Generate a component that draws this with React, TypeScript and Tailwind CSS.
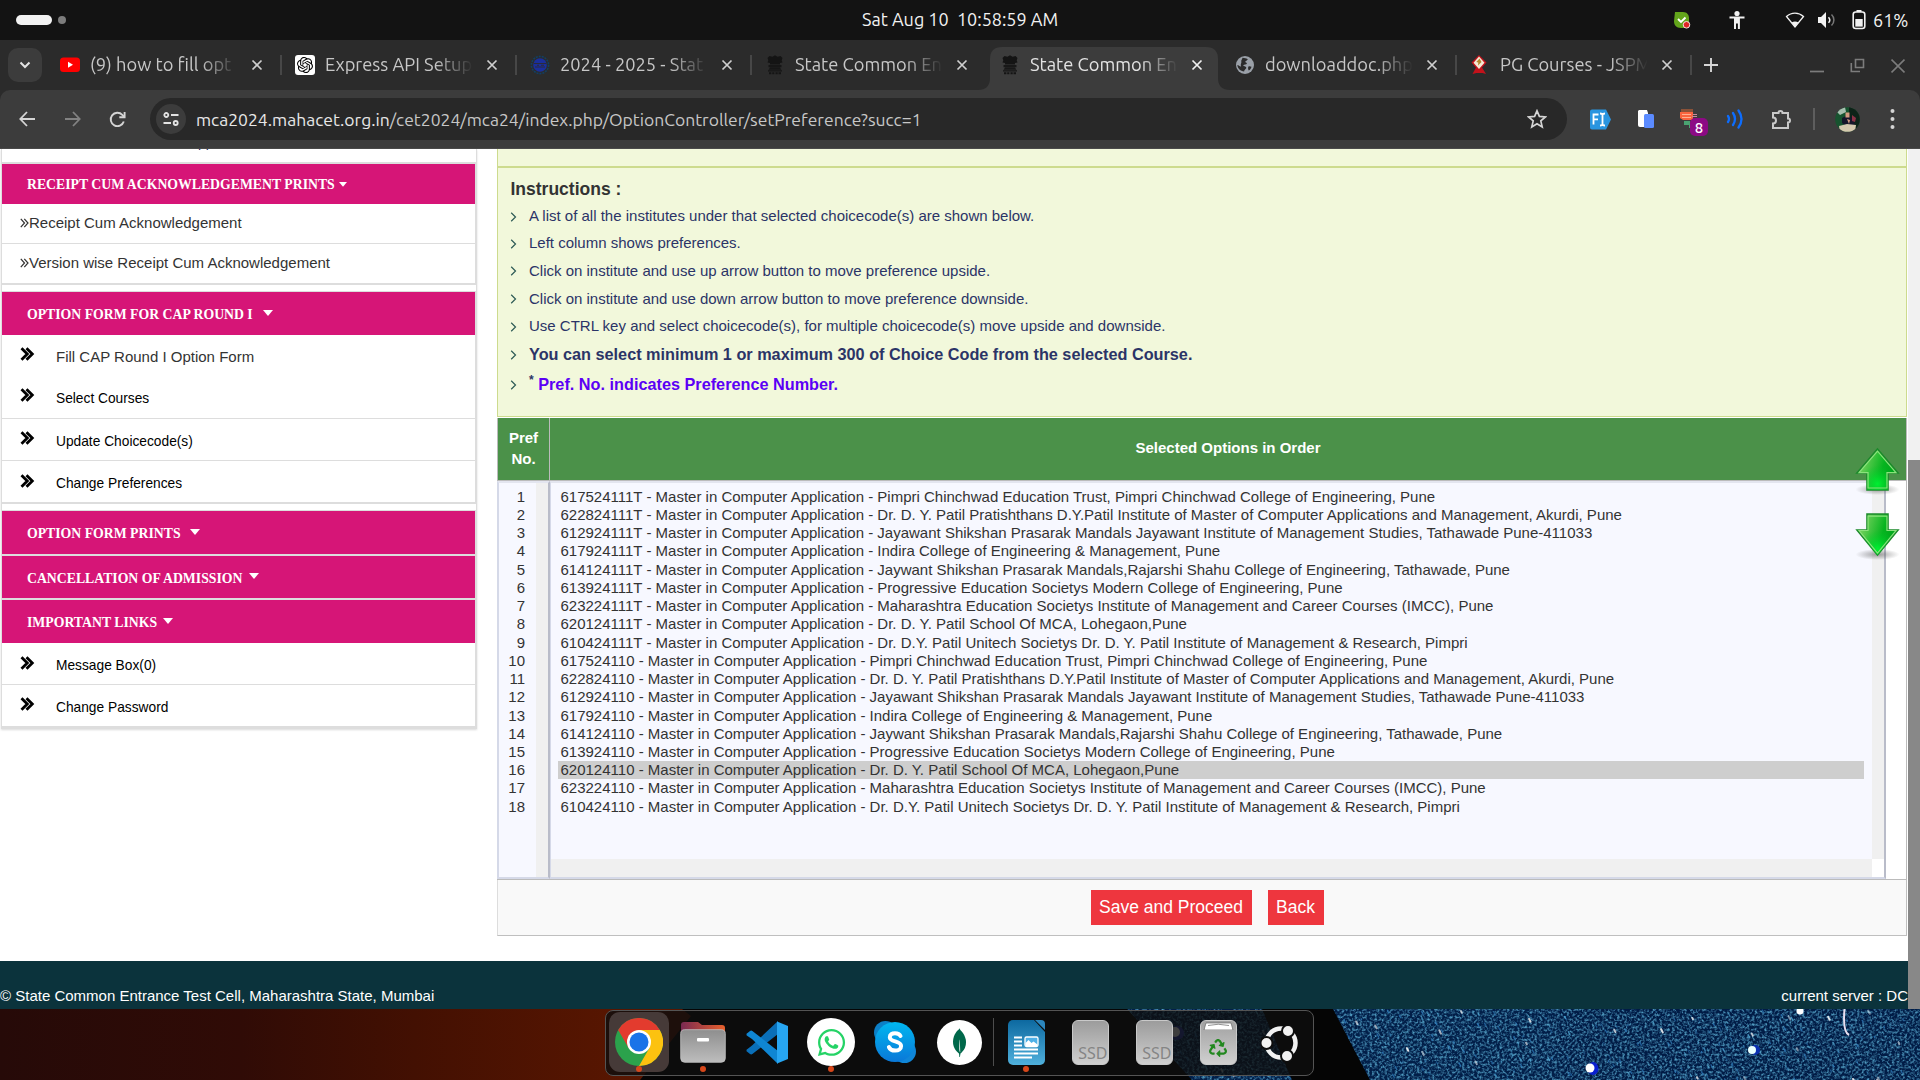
import type { ReactNode } from "react";
import { FaWhatsapp, FaRecycle } from "react-icons/fa";
import { SiOpenai, SiMongodb } from "react-icons/si";

const UI = "font-['Ubuntu','Noto_Sans',sans-serif]";

/* ---------- favicons ---------- */
function YoutubeIcon() {
  return (
    <svg width="20" height="20" viewBox="0 0 20 20">
      <rect x="0" y="2.500" width="20" height="14.500" rx="3.500" fill="#f00" />
      <path d="M8 6.800l5 3-5 3z" fill="#fff" />
    </svg>
  );
}
function GptIcon() {
  return (
    <span className="flex h-5 w-5 items-center justify-center rounded-[3px] bg-white text-[16px] text-black">
      <SiOpenai />
    </span>
  );
}
function CellIcon() {
  return (
    <svg width="20" height="20" viewBox="0 0 20 20">
      <circle cx="10" cy="10" r="8.600" fill="none" stroke="#123f63" strokeWidth="1.600" strokeDasharray="2 1" />
      <circle cx="10" cy="10" r="6.800" fill="#1a2f9c" />
      <path d="M4 8.500h12M5 12h10M7 10.200h2M11 10.200h3" stroke="#2b2b3c" strokeWidth="1.100" />
    </svg>
  );
}
function EmblemIcon() {
  return (
    <svg width="20" height="20" viewBox="0 0 20 20" fill="#141414">
      <path d="M4.500 1l3 .7L10 .3l2.500 1.400 3-.7 2 2-.8 2.200.8 2.300-2.600.6.2 1.500H4.900l.2-1.500-2.600-.6.8-2.300L2.500 3z" />
      <path d="M3.500 10h13v2.200h-13zM5 12.600h10l1.400 2.200H3.600z" opacity=".9" />
      <path d="M3 15.200h14v1.300H3zM4 17.300h2.400v2H4zM7.200 17.300h2.200v2H7.200zM10.500 17.300h2.200v2h-2.200zM13.500 17.300h2.500v2h-2.500z" />
    </svg>
  );
}
function GlobeIcon() {
  return (
    <svg width="20" height="20" viewBox="0 0 20 20">
      <circle cx="10" cy="10" r="9" fill="#9aa0a8" />
      <path d="M7.500 2.800c2 .6 3.800.2 5 1.200.8 1.200-1.600 1.600-2.200 2.600-.3 1.200 1.800.8 1.600 2.200-.6 1.200-2.600.6-3.800 1.400 1 1.400 3.400 1 3.200 2.800-.4 1.400-2 1.400-2.200 3.400-3.600-.2-6.400-2.800-6.800-6.400 1.400.2 2.400 1.600 3.800 1.400C5 9.400 6.800 8 6.300 6.400 6 5.200 7.300 4.200 7.500 2.800z" fill="#2b2b2b" />
      <path d="M13.500 11.500c1.200-.4 2.200.2 3 .2-.4 1.700-1.500 3-2.800 3.900-.5-1.300-1-2.900-.2-4.100z" fill="#2b2b2b" />
    </svg>
  );
}
function JspmIcon() {
  return (
    <svg width="20" height="20" viewBox="0 0 20 20">
      <path d="M2.500 19l3.500-6.500h6L16 19l-3.500-1h-6z" fill="#c3121b" />
      <path d="M9 0l7.500 7.500L9 16 1.500 7.500z" fill="#c3121b" />
      <path d="M9 1.500l5.500 6.200L9 14 3.500 7.700z" fill="#f5e9d6" />
      <path d="M9.500 3.500l2 3.500-3.500 3.500.3-3-2-.5z" fill="#b5892f" />
    </svg>
  );
}

const tabs: { title: string; icon: ReactNode; sep: boolean }[] = [
  { title: "(9) how to fill opt", icon: <YoutubeIcon />, sep: true },
  { title: "Express API Setup", icon: <GptIcon />, sep: true },
  { title: "2024 - 2025 - Stat", icon: <CellIcon />, sep: true },
  { title: "State Common En", icon: <EmblemIcon />, sep: false },
  { title: "State Common En", icon: <EmblemIcon />, sep: false },
  { title: "downloaddoc.php", icon: <GlobeIcon />, sep: true },
  { title: "PG Courses - JSPM", icon: <JspmIcon />, sep: true },
];

function TopBar() {
  return (
    <div className={"relative flex h-10 items-center justify-between bg-[#131313] pl-4 pr-3 text-[#f2f2f2] " + UI}>
      <div className="flex items-center gap-1.5">
        <span className="h-[10px] w-9 rounded-full bg-[#f2f2f2]" />
        <span className="h-2 w-2 rounded-full bg-[#7d7d7d]" />
      </div>
      <div className="absolute left-[862px] top-[6px] whitespace-pre text-[18px] leading-[26px]">Sat Aug 10  10:58:59 AM</div>
      <div className="flex items-center">
        <svg width="18" height="18" viewBox="0 0 18 18" className="mr-[37px]">
          <path d="M2 1h8c4 0 6 3 6 6v9c-2 1-5 1-8 1-5 0-7-3-7-7z" fill="#63a51b" />
          <path d="M5 8l3 3 4.500-4.500" stroke="#fff" strokeWidth="1.900" fill="none" />
          <circle cx="13.500" cy="13.800" r="3.300" fill="#e02424" stroke="#f6dede" strokeWidth="1" />
        </svg>
        <svg width="18" height="20" viewBox="0 0 18 20" fill="#f2f2f2" className="mr-[39px]">
          <circle cx="9" cy="3.500" r="2.600" />
          <path d="M1.500 6.500h15v2h-4.600V19h-2v-5.500H8V19H6V8.500H1.500z" />
        </svg>
        <svg width="20" height="18" viewBox="0 0 20 18" className="mr-[13px]">
          <path d="M1.500 5.500c5-4.600 12-4.600 17 0L10 16z" fill="none" stroke="#f2f2f2" strokeWidth="1.300" />
          <path d="M6.500 11.600c2.300-1.600 4.700-1.600 7 0L10 16z" fill="#f2f2f2" />
        </svg>
        <svg width="18" height="18" viewBox="0 0 18 18" className="mr-[16px]">
          <path d="M0 6h3l5-5v16l-5-5H0z" fill="#f2f2f2" />
          <path d="M10.500 6.200c1.600 1.700 1.600 3.900 0 5.600" fill="none" stroke="#f2f2f2" strokeWidth="1.500" />
          <path d="M13.500 3.500c3.200 3 3.200 8 0 11" fill="none" stroke="#777" strokeWidth="1.500" />
        </svg>
        <svg width="14" height="20" viewBox="0 0 14 20" className="mr-[7px]">
          <path d="M4.500 0h5v2h-5z" fill="#f2f2f2" />
          <rect x="1.200" y="2" width="11.600" height="16.500" rx="2.500" fill="none" stroke="#f2f2f2" strokeWidth="1.600" />
          <rect x="3.300" y="9" width="7.400" height="7.600" fill="#f2f2f2" />
        </svg>
        <span className="-mt-px w-[35px] whitespace-nowrap text-[18px] leading-[26px]">61%</span>
      </div>
    </div>
  );
}

function CloseX({ active }: { active: boolean }) {
  return (
    <svg width="12" height="12" viewBox="0 0 12 12" stroke={active ? "#f0f0f0" : "#cfcfcf"} strokeWidth="1.700">
      <path d="M1.500 1.500l9 9M10.500 1.500l-9 9" />
    </svg>
  );
}

function TabStrip() {
  return (
    <div className={"flex h-[50px] items-start bg-[#2b2b2b] " + UI}>
      <div className="ml-2 mr-[4px] mt-2 flex h-[34px] w-[34px] items-center justify-center rounded-[10px] bg-[#3c3c3c]">
        <svg width="12" height="8" viewBox="0 0 12 8" fill="none" stroke="#e3e3e3" strokeWidth="2">
          <path d="M1.500 1.500L6 6l4.500-4.500" />
        </svg>
      </div>
      {tabs.map((t, i) => {
        const active = i === 4;
        return (
          <div key={i} className="relative flex h-[50px] w-[235px] items-center">
            {active && (
              <svg className="absolute left-[-8px] top-[7px]" width="252" height="43" viewBox="0 0 252 43">
                <path d="M0 43Q12 43 12 31V12Q12 0 24 0H228Q240 0 240 12V31Q240 43 252 43z" fill="#3c3c3c" />
              </svg>
            )}
            <div className="relative flex w-full items-center">
              <span className="ml-[14px] flex h-5 w-5">{t.icon}</span>
              <span
                className={
                  "-mt-[2px] ml-[10px] w-[147px] overflow-hidden whitespace-nowrap text-[18.3px] leading-[26px] [mask-image:linear-gradient(to_right,#000_110px,transparent_148px)] " +
                  (active ? "text-[#e3e3e3]" : "text-[#c7c7c7]")
                }
              >
                {t.title}
              </span>
              <span className="ml-[14px] flex"><CloseX active={active} /></span>
            </div>
            {t.sep && <span className="absolute right-[-1px] top-[15px] h-5 w-[2px] bg-[#474747]" />}
          </div>
        );
      })}
      <svg className="ml-[13px] mt-[18px]" width="14" height="14" viewBox="0 0 14 14" stroke="#d6d6d6" strokeWidth="1.900">
        <path d="M0 7h14M7 0v14" />
      </svg>
      <div className="ml-auto mr-[15px] mt-[18px] flex items-start gap-[26px]">
        <svg width="14" height="16" viewBox="0 0 14 16"><path d="M0 13.500h14" stroke="#7c7c7c" strokeWidth="1.700" /></svg>
        <svg width="15" height="16" viewBox="0 0 15 16" fill="none" stroke="#7c7c7c" strokeWidth="1.600">
          <path d="M5.500 1.500h8v8h-8zM1.300 5v8.500H10" />
        </svg>
        <svg width="14" height="16" viewBox="0 0 14 16" stroke="#7c7c7c" strokeWidth="1.700"><path d="M.5 1.500l13 13M13.500 1.500l-13 13" /></svg>
      </div>
    </div>
  );
}

function Toolbar() {
  return (
    <div className={"bg-[#2b2b2b] " + UI}>
      <div className="flex h-[59px] items-center rounded-t-[10px] border-b border-[#4a4a4a] bg-[#3c3c3c]">
        <svg className="ml-[19px]" width="16" height="16" viewBox="0 0 16 16" fill="none" stroke="#d5d5d5" strokeWidth="1.800"><path d="M16 8H1.500M8 1L1.300 8 8 15" /></svg>
        <svg className="ml-[30px]" width="16" height="16" viewBox="0 0 16 16" fill="none" stroke="#828282" strokeWidth="1.800"><path d="M0 8h14.500M8 1l6.700 7L8 15" /></svg>
        <svg className="ml-[28px]" width="17" height="17" viewBox="0 0 17 17" fill="none" stroke="#d5d5d5" strokeWidth="1.900">
          <path d="M14.800 10.500A6.700 6.700 0 1 1 13.300 3.800L15.300 6" />
          <path d="M15.600 1v5.300h-5.300" />
        </svg>
        <div className="ml-[24px] flex h-[42px] w-[1417px] items-center rounded-full bg-[#282828]">
          <span className="ml-[6px] flex h-[30px] w-[30px] items-center justify-center rounded-full bg-[#3c3c3c]">
            <svg width="16" height="14" viewBox="0 0 16 14" fill="none" stroke="#e3e3e3" strokeWidth="1.800">
              <circle cx="3.300" cy="3" r="2" /><path d="M8 3h7.500M.5 11H8" /><circle cx="12.700" cy="11" r="2" />
            </svg>
          </span>
          <span className="ml-[10px] whitespace-nowrap pt-px text-[17.53px] leading-[26px] text-[#c7c7c7]">
            <span className="text-[#e8e8e8]">mca2024.mahacet.org.in</span>/cet2024/mca24/index.php/OptionController/setPreference?succ=1
          </span>
          <svg className="ml-auto mr-[20px]" width="20" height="20" viewBox="0 0 20 20" fill="none" stroke="#d5d5d5" strokeWidth="1.700">
            <path d="M10 1.800l2.400 5.600 6 .5-4.600 4 1.400 6L10 14.700l-5.200 3.200 1.400-6-4.600-4 6-.5z" />
          </svg>
        </div>
        <svg className="ml-[23px]" width="21" height="21" viewBox="0 0 21 21">
          <path d="M2 .5h14l5 10-5 10H2a2 2 0 0 1-2-2v-16a2 2 0 0 1 2-2z" fill="#2a95e0" />
          <path d="M3.500 15.500v-10h5M3.500 10.300H8M10 4.500c1.500 0 2.500.5 2.500 1.500 0-1 1-1.500 2.500-1.500M12.500 6v9M10 16.500c1.500 0 2.500-.5 2.500-1.500 0 1 1 1.500 2.500 1.500" fill="none" stroke="#fff" strokeWidth="1.800" />
        </svg>
        <svg className="ml-[26px]" width="18" height="20" viewBox="0 0 18 20">
          <path d="M2 1h8l1 3v14H3a2 2 0 0 1-2-2V2z" fill="#fff" />
          <rect x="7" y="5" width="10" height="14" rx="1.500" fill="#5b8bff" />
        </svg>
        <div className="relative ml-[25px] h-[22px] w-[28px]">
          <svg width="18" height="20" viewBox="0 0 18 20">
            <path d="M1 1h12v3H1z" fill="#8a5238" /><path d="M0 4h13v8H3l-3-2z" fill="#f9643f" />
            <path d="M2 6.500h9M2 9.500h9" stroke="#ffb092" /><path d="M13 6.500h4M12 8.500h5" stroke="#c98a9a" /><path d="M4 13h6v4H4zM9 15h2v5H9z" fill="#4aa371" />
          </svg>
          <span className="absolute left-[10px] top-[10px] flex h-[18px] w-[18px] items-center justify-center rounded-[5px] bg-[#8c0a84] text-[15px] font-medium leading-none text-white">8</span>
        </div>
        <svg className="ml-[18px]" width="18" height="20" viewBox="0 0 18 20" fill="none" stroke="#0d6dfd" strokeWidth="2.300" strokeLinecap="round">
          <path d="M2 7q2 3 0 6M7 4q4 6 0 12M12.500 1.500q6 8.500 0 17" />
        </svg>
        <svg className="ml-[27px]" width="21" height="21" viewBox="0 0 21 21" fill="none" stroke="#c9c9c9" strokeWidth="2">
          <path d="M2 4h5.500a2 2 0 0 1 4 0H17v5.500a2 2 0 0 1 0 4V19H2v-4.500a3 3 0 0 0 0-6z" />
        </svg>
        <span className="ml-[21px] h-[22px] w-[2px] bg-[#5e5e5e]" />
        <svg className="ml-[20px]" width="25" height="25" viewBox="0 0 25 25">
          <defs><clipPath id="av"><circle cx="12.500" cy="12.500" r="12.300" /></clipPath></defs>
          <g clipPath="url(#av)">
            <rect width="25" height="25" fill="#17532f" />
            <path d="M14 0h11v25H14z" fill="#0d2318" />
            <path d="M1 4c3-3 6-4 9-4l1 5-6 3z" fill="#a6bfae" />
            <path d="M7 11l6-3 5 4 2 6-8 2-5-4z" fill="#16162a" />
            <path d="M10.500 5.500h4v5h-4zM12 12l3 1-1 4z" fill="#d39b80" />
            <path d="M4 19l8-2 9 1-1 7H5z" fill="#d5c9ae" />
            <path d="M17 8l4 3-1 4-3-1z" fill="#8a3245" />
          </g>
        </svg>
        <svg className="ml-[30px]" width="5" height="22" viewBox="0 0 5 22" fill="#d5d5d5"><circle cx="2.500" cy="3" r="2" /><circle cx="2.500" cy="11" r="2" /><circle cx="2.500" cy="19" r="2" /></svg>
      </div>
    </div>
  );
}

function Caret({ cls, w = 10 }: { cls: string; w?: number }) {
  return (
    <svg className={cls} width={w} height={w * 0.6} viewBox="0 0 10 6"><path d="M0 0h10L5 6z" fill="#fff" /></svg>
  );
}

function PinkHeading({ text, h, caret, w }: { text: string; h: string; caret: string; w?: number }) {
  return (
    <div className={"flex items-center bg-[#d61577] pl-[25px] font-['Liberation_Serif',serif] text-[13.75px] font-bold text-white " + h}>
      <span className="whitespace-nowrap">{text}</span>
      <Caret cls={caret} w={w} />
    </div>
  );
}

function SideLink({ text, h, first, line }: { text: string; h: string; first?: boolean; line?: boolean }) {
  return (
    <div className={"flex items-center bg-white pl-[18px] " + h + (line ? " border-b border-[#ddd]" : "")}>
      <svg width="15" height="14" viewBox="0 0 15 14" fill="none" stroke="#000" strokeWidth="2.800" className="relative -top-[4px]">
        <path d="M1.500 1.200L7.300 7l-5.800 5.800M6.500 1.200L12.300 7l-5.800 5.800" />
      </svg>
      <span className={first ? "ml-[21px] text-[15px] text-[#333]" : "ml-[21px] text-[13.75px] text-black"}>{text}</span>
    </div>
  );
}

function DoubleAngle() {
  return (
    <svg width="9" height="10" viewBox="0 0 9 10" fill="none" stroke="#333" strokeWidth="1.200">
      <path d="M.8.8L4.500 5 .8 9.200M4.300.8L8 5 4.300 9.200" />
    </svg>
  );
}

function Sidebar() {
  return (
    <div className="ml-px h-[580px] w-[476px] overflow-hidden border-l border-r border-[#ddd] shadow-[0_1px_2px_rgba(0,0,0,0.15)]">
      <div className="flex h-[15px] items-start border-b-2 border-[#ddd]">
        <span className="ml-[196px] mt-[-13px] h-4 text-[13.75px] leading-[14px] text-[#1d2a66]">pp</span>
      </div>
      <div className="border-r border-[#ddd]">
        <PinkHeading text="RECEIPT CUM ACKNOWLEDGEMENT PRINTS" h="h-10 pt-[2px]" caret="ml-1 -mt-px" w={8} />
        <div className="flex h-10 items-center border-b border-[#ddd] pb-px pl-[18px] text-[15px] text-[#333]">
          <DoubleAngle /><span>Receipt Cum Acknowledgement</span>
        </div>
        <div className="flex h-[41px] items-center border-b-2 border-[#ddd] pb-px pl-[18px] text-[15px] text-[#333]">
          <DoubleAngle /><span>Version wise Receipt Cum Acknowledgement</span>
        </div>
      </div>
      <div className="h-[7px] border-b border-[#ddd] bg-white" />
      <div className="border-r border-[#ddd]">
        <PinkHeading text="OPTION FORM FOR CAP ROUND I" h="h-[43px] pt-[3px]" caret="relative -top-[2px] ml-[10px]" />
        <SideLink text="Fill CAP Round I Option Form" h="h-[43px] pt-[2px]" first />
        <SideLink text="Select Courses" h="h-[41px] pt-[2px]" line />
        <SideLink text="Update Choicecode(s)" h="h-[42px] pt-[5px]" line />
        <SideLink text="Change Preferences" h="h-[42px] pt-[6px]" line />
      </div>
      <div className="h-[8px] border-b border-t border-[#ddd] bg-white" />
      <div className="border-r border-[#ddd]">
        <PinkHeading text="OPTION FORM PRINTS" h="h-[43px] pt-[3px]" caret="relative -top-[2px] ml-[9px]" />
        <div className="h-[2px] bg-[#ddd]" />
        <PinkHeading text="CANCELLATION OF ADMISSION" h="h-[42px] pt-[4px]" caret="relative -top-[3px] ml-[7px]" />
        <div className="h-[2px] bg-[#ddd]" />
        <PinkHeading text="IMPORTANT LINKS" h="h-[43px] pt-[3px]" caret="relative -top-[2px] ml-[6px]" />
        <SideLink text="Message Box(0)" h="h-[42px] pt-[6px]" line />
        <SideLink text="Change Password" h="h-[41px] pt-[5px]" />
        <div className="h-[3px] bg-[#ddd]" />
      </div>
    </div>
  );
}

const bullets: { node: ReactNode; h: string; cls: string }[] = [
  { node: "A list of all the institutes under that selected choicecode(s) are shown below.", h: "h-[27px]", cls: "text-[15px]" },
  { node: "Left column shows preferences.", h: "h-[27px]", cls: "text-[15px]" },
  { node: "Click on institute and use up arrow button to move preference upside.", h: "h-[28.5px]", cls: "text-[15px]" },
  { node: "Click on institute and use down arrow button to move preference downside.", h: "h-[27.5px]", cls: "text-[15px]" },
  { node: "Use CTRL key and select choicecode(s), for multiple choicecode(s) move upside and downside.", h: "h-[27px]", cls: "text-[15px]" },
  { node: "You can select minimum 1 or maximum 300 of Choice Code from the selected Course.", h: "h-[29px]", cls: "text-[16.25px] font-bold" },
  {
    node: (
      <><span className="relative -top-[6px] text-[12px]">*</span> <span className="text-[#5b00f5]">Pref. No. indicates Preference Number.</span></>
    ),
    h: "h-[31px]",
    cls: "text-[16.25px] font-bold",
  },
];

const P = " - Master in Computer Application - ";
const inst = {
  a: "Pimpri Chinchwad Education Trust, Pimpri Chinchwad College of Engineering, Pune",
  b: "Dr. D. Y. Patil Pratishthans D.Y.Patil Institute of Master of Computer Applications and Management, Akurdi, Pune",
  c: "Jayawant Shikshan Prasarak Mandals Jayawant Institute of Management Studies, Tathawade Pune-411033",
  d: "Indira College of Engineering & Management, Pune",
  e: "Jaywant Shikshan Prasarak Mandals,Rajarshi Shahu College of Engineering, Tathawade, Pune",
  f: "Progressive Education Societys Modern College of Engineering, Pune",
  g: "Maharashtra Education Societys Institute of Management and Career Courses (IMCC), Pune",
  h: "Dr. D. Y. Patil School Of MCA, Lohegaon,Pune",
  i: "Dr. D.Y. Patil Unitech Societys Dr. D. Y. Patil Institute of Management & Research, Pimpri",
};
const options = [
  "617524111T" + P + inst.a,
  "622824111T" + P + inst.b,
  "612924111T" + P + inst.c,
  "617924111T" + P + inst.d,
  "614124111T" + P + inst.e,
  "613924111T" + P + inst.f,
  "623224111T" + P + inst.g,
  "620124111T" + P + inst.h,
  "610424111T" + P + inst.i,
  "617524110" + P + inst.a,
  "622824110" + P + inst.b,
  "612924110" + P + inst.c,
  "617924110" + P + inst.d,
  "614124110" + P + inst.e,
  "613924110" + P + inst.f,
  "620124110" + P + inst.h,
  "623224110" + P + inst.g,
  "610424110" + P + inst.i,
];

function GreenArrow({ down }: { down?: boolean }) {
  const id = down ? "gd" : "gu";
  const d = down ? "M12 2h21v16h10L22.500 43 2 18h10z" : "M22.500 2L43 26H33v17H12V26H2z";
  return (
    <svg width="45" height="50" viewBox="0 0 45 50">
      <defs>
        <linearGradient id={id} x1="0" y1="0" x2="1" y2="0.300">
          <stop offset="0.200" stopColor="#6fd05a" /><stop offset="0.700" stopColor="#06b41f" /><stop offset="1" stopColor="#00a51c" />
        </linearGradient>
        <radialGradient id={id + "r"} cx="0.500" cy="0.850" r="0.450">
          <stop offset="0" stopColor="#00f032" /><stop offset="1" stopColor="#00c828" stopOpacity="0" />
        </radialGradient>
        <radialGradient id={id + "s"}>
          <stop offset="0" stopColor="#555" stopOpacity=".55" /><stop offset="1" stopColor="#555" stopOpacity="0" />
        </radialGradient>
      </defs>
      <ellipse cx="22.500" cy="42.500" rx="22" ry="5.500" fill={`url(#${id}s)`} />
      <path d={d} fill={`url(#${id})`} stroke="#1c8a2b" strokeWidth="1.600" />
      <path d={d} fill={`url(#${id}r)`} />
      <path d={d} fill="none" stroke="#8be27c" strokeWidth="1.300" transform="translate(2.200 2.300) scale(0.902 0.900)" />
    </svg>
  );
}

function Main() {
  return (
    <div className="relative ml-[20px] w-[1410px]">
      <div className="h-[19px] border-b-2 border-l border-r border-[#cddb8e] bg-[#f2f8db]" />
      <div className="h-[249px] border-b border-l border-r border-[#cddb8e] bg-[#f2f8db] pl-[12px]">
        <div className="flex h-[35px] items-center pl-[0.5px] pt-[8px] text-[17.5px] font-bold text-[#333]">Instructions :</div>
        <div>
          {bullets.map((b, i) => (
            <div key={i} className={"flex items-center whitespace-nowrap text-[#2b3467] " + b.h}>
              <svg width="7" height="10" viewBox="0 0 7 10" fill="none" stroke="#2c5a55" strokeWidth="1.200" className="mr-[12px]"><path d="M1.200.8L5.500 5 1.200 9.200" /></svg>
              <span className={b.cls}>{b.node}</span>
            </div>
          ))}
        </div>
      </div>
      <div className="mt-px flex h-[62px] border-l border-r border-[#bbb] bg-[#4b9149] pb-[2px] text-[15px] font-bold text-white">
        <div className="-mb-[2px] flex w-[52px] flex-col items-center justify-center border-r border-[#bbb] pb-[2px] text-center leading-[21px]">
          <span>Pref</span>
          <span>No.</span>
        </div>
        <div className="flex flex-1 items-center justify-center">Selected Options in Order</div>
      </div>
      <div className="flex h-[400px] border-b border-r border-t border-[#bbb] bg-white text-[15px] text-[#333]">
        <div className="flex w-[53px] border-2 border-[#d5d9e8] border-t-[#e3e5ef] border-r-[#b9bcc9]">
          <div className="flex-1 bg-[#f7f8ff] pr-[11px] pt-[4.7px] text-right">
            {options.map((_, i) => <div key={i} className="h-[18.235px] leading-[18.235px]">{i + 1}</div>)}
          </div>
          <div className="w-[12px] bg-[#f0f0f0]" />
        </div>
        <div className="flex w-[1336px] border-2 border-l border-[#d5d9e8] border-r-[#b9bcc9] border-t-[#e3e5ef]">
          <div className="flex flex-1 flex-col">
            <div className="flex-1 bg-[#f7f8ff] pl-[7px] pr-[8px] pt-[4.7px]">
              {options.map((o, i) => (
                <div key={i} className={"h-[18.235px] whitespace-nowrap pl-[2.5px] leading-[18.235px] " + (i === 15 ? "bg-[#cecece]" : "")}>{o}</div>
              ))}
            </div>
            <div className="h-[18px] bg-[#f0f0f0]" />
          </div>
          <div className="mb-[18px] w-[12px] bg-[#f0f0f0]" />
        </div>
      </div>
      <div className="flex h-[56px] items-center justify-center gap-[16px] border-b border-l border-r border-[#bfbfbf] border-l-[#ddd] bg-[#f9f9f9] pl-[10px] text-[17.5px] text-white">
        <div className="flex h-[35px] w-[161px] items-center justify-center bg-[#ee363e]">Save and Proceed</div>
        <div className="flex h-[35px] w-[56px] items-center justify-center bg-[#ee363e]">Back</div>
      </div>
      <div className="absolute right-[7px] top-[298px] flex flex-col gap-[15px]">
        <GreenArrow />
        <GreenArrow down />
      </div>
    </div>
  );
}

/* Deterministic star field for the wallpaper */
function makeStars(n: number) {
  let s = 77123;
  const r = () => {
    s = (s * 16807) % 2147483647;
    return s / 2147483647;
  };
  for (let i = 0; i < 20; i++) r();
  return Array.from({ length: n }, () => ({ x: 1120 + r() * 800, y: r() * 71, l: 1 + r() * 2.5, c: r(), o: 0.35 + r() * 0.6 }));
}
const stars = makeStars(330);

function Wallpaper() {
  return (
    <svg className="absolute inset-0" width="1920" height="71" viewBox="0 0 1920 71">
      <defs>
        <linearGradient id="brown" x1="0" y1="0" x2="1" y2="0">
          <stop offset="0" stopColor="#260a08" /><stop offset=".35" stopColor="#300b06" /><stop offset=".6" stopColor="#431002" /><stop offset=".9" stopColor="#581601" /><stop offset="1" stopColor="#5a1701" />
        </linearGradient>
        <filter id="noise" x="0" y="0" width="100%" height="100%">
          <feTurbulence type="fractalNoise" baseFrequency="0.4" numOctaves="2" seed="4" />
          <feColorMatrix values="0 0 0 0 0.100  0 0 0 0 0.400  0 0 0 0 0.620  0 2.400 0 0 -0.980" />
        </filter>
        <clipPath id="sky"><path d="M1127 0h135l30 71h-100zM1333 0H1920V71h-550z" /></clipPath>
      </defs>
      <rect width="1920" height="71" fill="#050505" />
      <path d="M0 0H682L691 7 640 71H0z" fill="url(#brown)" />
      <g clipPath="url(#sky)">
        <rect x="1120" width="800" height="71" fill="#021f49" />
        <rect x="1560" width="360" height="71" fill="#021a44" opacity=".6" />
        <rect x="1120" width="800" height="71" filter="url(#noise)" opacity=".9" />
        {stars.map((s, i) => (
          <path key={i} d={`M${s.x} ${s.y}l${s.l * 0.5} ${s.l}`} stroke={s.c > 0.88 ? "#fff" : s.c > 0.5 ? "#4fa3cf" : "#2b74b4"} strokeWidth={s.c > 0.88 ? 2 : 1.3} strokeLinecap="round" opacity={s.o} />
        ))}
        <ellipse cx="1593" cy="59.500" rx="5.500" ry="6.500" fill="#0a1fd0" /><circle cx="1590" cy="59" r="4.500" fill="#fff" />
        <circle cx="1755" cy="41" r="5" fill="#0a2fb0" /><circle cx="1752" cy="41" r="4" fill="#e9ffff" />
        <circle cx="1800" cy="2" r="3.500" fill="#fff" /><circle cx="1177" cy="24" r="7" fill="#2d3cae" /><circle cx="1175" cy="23" r="5" fill="#fff" />
      </g>
      <path d="M1844.500 0C1843.500 12 1844 24 1849 26" fill="none" stroke="#e9dff0" strokeWidth="2" />
    </svg>
  );
}

function DockItem({ children, dot, active }: { children: ReactNode; dot?: boolean; active?: boolean }) {
  return (
    <div className={"relative mr-1 flex h-[60px] w-[60px] shrink-0 items-center justify-center rounded-[11px] " + (active ? "bg-[#463a38]" : "")}>
      {children}
      {dot && <span className="absolute bottom-0 left-[27px] h-[6px] w-[6px] rounded-full bg-[#d7471a]" />}
    </div>
  );
}
function Ssd() {
  return (
    <div className="flex h-[45px] w-[37px] items-end justify-end rounded-[6px] border border-[#c9c9c9] bg-linear-to-b from-[#9c9c9c] to-[#cfcfcf] pb-[2px] font-['Noto_Sans',sans-serif] text-[16px] leading-[18px] text-[#858585]">SSD</div>
  );
}

function Dock() {
  return (
    <div className="relative ml-[605px] h-[71px] w-[709px] pt-px">
      <div className="flex h-[66px] items-start rounded-[8px] border border-[#545454] bg-[#0e0e0e]/80 pl-[3px] pt-px">
        <DockItem dot active>
          <svg width="48" height="48" viewBox="0 0 48 48">
            <circle cx="24" cy="24" r="24" fill="#2ba24c" />
            <path d="M24 24L3.200 12A24 24 0 0 1 44.800 12z" fill="#e33b2e" />
            <path d="M3.200 12L13.600 30 24 24 24 12z" fill="#e33b2e" />
            <path d="M24 12H44.800A24 24 0 0 1 24 48L34.400 30 24 24z" fill="#fcc210" />
            <circle cx="24" cy="24" r="12" fill="#fff" />
            <circle cx="24" cy="24" r="9.500" fill="#1a73e8" />
          </svg>
        </DockItem>
        <DockItem dot>
          <svg width="46" height="42" viewBox="0 0 46 42">
            <defs>
              <linearGradient id="f1"><stop offset="0" stopColor="#7a2a52" /><stop offset="1" stopColor="#e8602c" /></linearGradient>
              <linearGradient id="f2" x1="0" y1="0" x2="0" y2="1"><stop offset="0" stopColor="#8e8e8e" /><stop offset="1" stopColor="#bdbdbd" /></linearGradient>
            </defs>
            <path d="M1 4a3 3 0 0 1 3-3h14l4 3h20a3 3 0 0 1 3 3v12H1z" fill="url(#f1)" />
            <rect x=".7" y="8.700" width="44.600" height="32.600" rx="4" fill="url(#f2)" stroke="#c4c4c4" strokeWidth=".8" />
            <rect x="17" y="17" width="12" height="3.500" rx="1" fill="#fff" />
          </svg>
        </DockItem>
        <DockItem>
          <svg width="43" height="43" viewBox="0 0 43 43">
            <path d="M32 0L6 24.500 1.500 28a1.600 1.600 0 0 0 0 3l2.500 2a2 2 0 0 0 2.400 0L32 13z" fill="#0a6fb8" />
            <path d="M32 43L6 18 1.500 15a1.600 1.600 0 0 1 0-3L4 10a2 2 0 0 1 2.400 0L32 30z" fill="#0f86d3" />
            <path d="M31 .5l11 4.500v33l-11 4.500z" fill="#27a6f2" />
          </svg>
        </DockItem>
        <DockItem dot>
          <span className="flex h-12 w-12 items-center justify-center rounded-full bg-white text-[31px] text-[#25d366]"><FaWhatsapp /></span>
        </DockItem>
        <DockItem>
          <svg width="42" height="42" viewBox="0 0 42 42">
            <defs><linearGradient id="sk" x1="0" y1="0" x2="0" y2="1"><stop offset="0" stopColor="#00b7f0" /><stop offset="1" stopColor="#0a78d8" /></linearGradient></defs>
            <circle cx="11.500" cy="11.500" r="11.500" fill="#0c7fc6" /><circle cx="30.500" cy="30.500" r="11.500" fill="#0f86d8" />
            <circle cx="21" cy="21" r="20" fill="url(#sk)" />
            <path d="M26.500 15c-1-2.200-3-2.800-5.500-2.800-3 0-5.200 1.400-5.200 4 0 5.400 11.300 3 11.300 8.800 0 2.800-2.400 4.600-5.900 4.600-3 0-5.200-.9-6.300-3.500" fill="none" stroke="#fff" strokeWidth="4" strokeLinecap="round" />
          </svg>
        </DockItem>
        <DockItem>
          <span className="flex h-[45px] w-[45px] items-center justify-center rounded-full bg-white text-[29px] text-[#00684a]"><SiMongodb /></span>
        </DockItem>
        <span className="mr-[2px] mt-[6px] h-12 w-px shrink-0 bg-[#4d4d4d]" />
        <DockItem dot>
          <svg width="37" height="45" viewBox="0 0 37 45">
            <defs><linearGradient id="wr" x1="0" y1="0" x2="0" y2="1"><stop offset="0" stopColor="#0d69a0" /><stop offset="1" stopColor="#4fb0dc" /></linearGradient></defs>
            <path d="M5 0h21L37 12v28a5 5 0 0 1-5 5H5a5 5 0 0 1-5-5V5a5 5 0 0 1 5-5z" fill="url(#wr)" />
            <path d="M27 0h6a4 4 0 0 1 4 4v6z" fill="#2b86bd" />
            <path d="M6 17.500h8M6 21.500h8M6 25.500h8M6 29.500h24M6 33.500h24M6 37.500h18" stroke="#fff" strokeWidth="2" />
            <rect x="17" y="17" width="13" height="9.500" rx="1.500" fill="#4fb0e6" stroke="#fff" strokeWidth="1.300" />
            <path d="M17.500 26v-3l3-3 3 3 2-1.500 4 3V26z" fill="#fff" />
          </svg>
        </DockItem>
        <DockItem><Ssd /></DockItem>
        <DockItem><Ssd /></DockItem>
        <DockItem>
          <div className="flex h-[45px] w-[37px] flex-col items-center rounded-[6px] border border-[#c9c9c9] bg-linear-to-b from-[#a0a0a0] to-[#d0d0d0] text-[18px] text-[#22881f]">
            <svg width="31" height="8" viewBox="0 0 31 8" className="mb-[9px] mt-px"><path d="M3 1h25l2 7H1z" fill="#fff" stroke="#666" strokeWidth=".7" /><path d="M5 3.500q10-2.500 21 0" stroke="#777" strokeWidth=".8" fill="none" /></svg>
            <FaRecycle />
          </div>
        </DockItem>
        <div className="-ml-[2px] flex h-[60px] w-[60px] shrink-0 items-center justify-center pt-[2px]">
          <svg width="38" height="38" viewBox="0 0 38 38">
            <circle cx="20" cy="19" r="14.500" fill="none" stroke="#f2f2f2" strokeWidth="4.500" />
            <g fill="#f2f2f2" stroke="#0e0e0e" strokeWidth="2"><circle cx="5.500" cy="19" r="6" /><circle cx="27" cy="7" r="6" /><circle cx="26" cy="32" r="6" /></g>
          </svg>
        </div>
      </div>
    </div>
  );
}

export default function App() {
  return (
    <div className="flex h-[1080px] w-[1920px] flex-col overflow-hidden bg-black font-['Liberation_Sans',Arial,sans-serif]">
      <TopBar />
      <TabStrip />
      <Toolbar />
      <div className="flex h-[860px] bg-white">
        <div className="flex w-[1908px] flex-col">
          <div className="flex h-[812px]">
            <Sidebar />
            <Main />
          </div>
          <div className="flex h-12 items-end justify-between bg-[#0b333c] pb-[4px] text-[15px] leading-[18px] text-white">
            <span>© State Common Entrance Test Cell, Maharashtra State, Mumbai</span>
            <span>current server : DC</span>
          </div>
        </div>
        <div className="w-3 bg-[#f1f1f1] pt-[311px]">
          <div className="h-full bg-[#888]" />
        </div>
      </div>
      <div className="relative h-[71px]">
        <Wallpaper />
        <Dock />
      </div>
    </div>
  );
}
